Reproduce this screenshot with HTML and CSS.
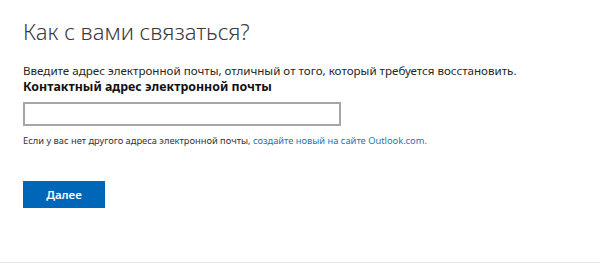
FILE: index.html
```html
<!DOCTYPE html>
<html>
<head>
    <title>Как с вами связаться?</title>
    <link rel="stylesheet" href="styles.css">
</head>
<body>
    <div class="page">
        <h1 class="title">Как с вами связаться?</h1>
        <p class="intro">Введите адрес электронной почты, отличный от того, который требуется восстановить.</p>
        <label class="field-label" for="contact">Контактный адрес электронной почты</label>
        <input class="field" id="contact" type="text">
        <p class="hint">Если у вас нет другого адреса электронной почты, <a href="#" class="hint-link">создайте новый на сайте Outlook.com.</a></p>
        <button class="next-btn" type="button">Далее</button>
    </div>
    <div class="footer-line"></div>
</body>
</html>
```

FILE: styles.css
```css
body {
    margin: 0;
    background-color: #fff;
    color: #262626;
    font-family: "Noto Sans", "Open Sans", sans-serif;
}

.page {
    height: 262px;
    box-sizing: border-box;
    padding: 17px 0 0 23px;
}

.title {
    margin: 0;
    font-size: 22px;
    font-weight: 300;
    line-height: 28px;
    color: #3a3a3a;
}

.intro {
    margin: 18px 0 0 0;
    font-size: 11.6px;
    line-height: 16px;
}

.field-label {
    display: block;
    font-size: 12.4px;
    font-weight: bold;
    line-height: 16px;
    color: #111;
}

.field {
    display: block;
    margin-top: 7px;
    width: 318px;
    height: 24px;
    box-sizing: border-box;
    border: 2px solid #a6a6a6;
    padding: 0 6px;
    font-family: inherit;
}

.hint {
    margin: 8px 0 0 0;
    font-size: 9.3px;
    line-height: 14px;
    color: #333;
}

.hint-link {
    color: #2672b8;
    text-decoration: none;
}

.next-btn {
    display: block;
    margin-top: 33px;
    width: 82px;
    height: 27px;
    border: none;
    background-color: #0067b8;
    color: #fff;
    font-family: inherit;
    font-size: 11.5px;
    font-weight: 600;
}

.footer-line {
    border-top: 1px solid #e3e3e3;
}
```
